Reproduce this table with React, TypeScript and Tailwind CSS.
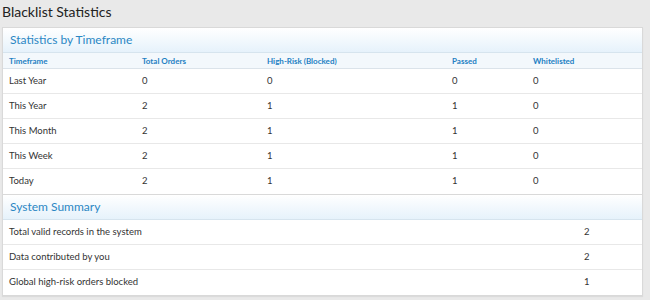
const timeframeRows = [
  { label: 'Last Year', total: 0, blocked: 0, passed: 0, white: 0 },
  { label: 'This Year', total: 2, blocked: 1, passed: 1, white: 0 },
  { label: 'This Month', total: 2, blocked: 1, passed: 1, white: 0 },
  { label: 'This Week', total: 2, blocked: 1, passed: 1, white: 0 },
  { label: 'Today', total: 2, blocked: 1, passed: 1, white: 0 },
];

const summaryRows = [
  { label: 'Total valid records in the system', value: 2 },
  { label: 'Data contributed by you', value: 2 },
  { label: 'Global high-risk orders blocked', value: 1 },
];

function PanelHeader({ title }: { title: string }) {
  return (
    <div className="h-[25px] flex items-center px-[7px] bg-gradient-to-b from-white to-[#e6f2fb] border-b border-[#d6e4ee]">
      <span className="text-[12px] text-[#2b87c4] leading-none">{title}</span>
    </div>
  );
}

export default function App() {
  return (
    <div
      className="w-[650px] h-[300px] bg-[#e9e9e9] px-[2px] text-[#333] overflow-hidden"
      style={{ fontFamily: 'Lato, "Noto Sans", sans-serif' }}
    >
      <h1 className="h-[27px] flex items-center text-[14px] text-[#222] leading-none pb-[4px]">
        Blacklist Statistics
      </h1>

      <div className="w-[641px] bg-white border border-[#d9d9d9] shadow-[0_1px_1px_rgba(0,0,0,0.06)]">
        <PanelHeader title="Statistics by Timeframe" />
        <div className="grid grid-cols-[133px_125px_185px_81px_1fr] h-[16px] items-center bg-[#f3f8fc] border-b border-[#dbe3ea] px-[6px] text-[8px] font-bold text-[#2380c3]">
          <span>Timeframe</span>
          <span>Total Orders</span>
          <span>High-Risk (Blocked)</span>
          <span>Passed</span>
          <span>Whitelisted</span>
        </div>
        {timeframeRows.map((r, i) => (
          <div
            key={r.label}
            className={`grid grid-cols-[133px_125px_185px_81px_1fr] h-[25px] items-center px-[6px] text-[9.5px] ${
              i < timeframeRows.length - 1 ? 'border-b border-[#e8e8e8]' : ''
            }`}
          >
            <span>{r.label}</span>
            <span>{r.total}</span>
            <span>{r.blocked}</span>
            <span>{r.passed}</span>
            <span>{r.white}</span>
          </div>
        ))}
      </div>

      <div className="w-[641px] bg-white border border-[#d9d9d9] border-t-0 shadow-[0_1px_1px_rgba(0,0,0,0.06)]">
        <PanelHeader title="System Summary" />
        {summaryRows.map((r, i) => (
          <div
            key={r.label}
            className={`flex h-[25px] items-center px-[6px] text-[9.5px] ${
              i < summaryRows.length - 1 ? 'border-b border-[#e8e8e8]' : ''
            }`}
          >
            <span className="w-[575px]">{r.label}</span>
            <span>{r.value}</span>
          </div>
        ))}
      </div>
    </div>
  );
}
